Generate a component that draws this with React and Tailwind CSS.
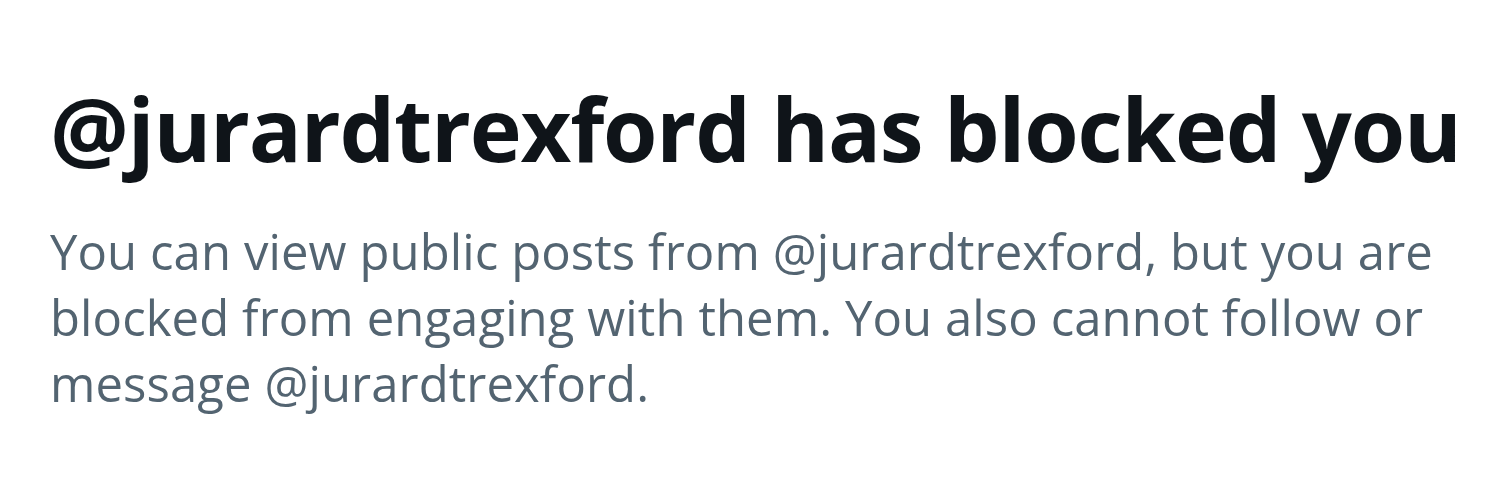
export default function App() {
  return (
    <div className="h-[500px] w-[1500px] bg-white" style={{ fontFamily: '"Open Sans", "Noto Sans", sans-serif' }}>
      <div className="px-[50px] pt-[70px]">
        <h1 className="text-[88px] font-bold leading-[116px] tracking-[-1.2px] text-[#0f1419] whitespace-nowrap">
          @jurardtrexford has blocked you
        </h1>
        <p className="mt-[32px] w-[1420px] text-[49px] leading-[66px] tracking-[0.1px] text-[#536471]">
          You can view public posts from @jurardtrexford, but you are blocked from engaging with them. You also cannot follow or message @jurardtrexford.
        </p>
      </div>
    </div>
  );
}
